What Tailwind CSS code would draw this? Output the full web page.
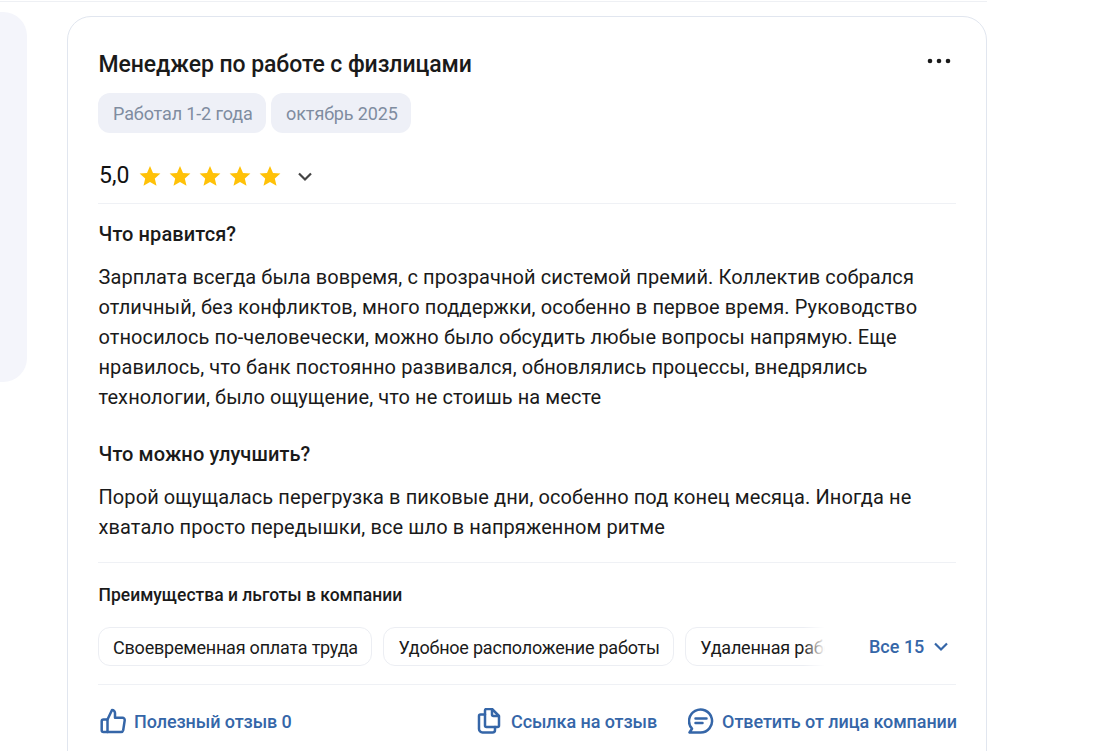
<!DOCTYPE html>
<html lang="ru">
<head>
<meta charset="utf-8">
<script src="https://cdn.jsdelivr.net/npm/@tailwindcss/browser@4"></script>
</head>
<body class="bg-white overflow-hidden font-['Roboto',sans-serif] text-[#1a1a1a]">
<div class="w-[1102px] h-[751px] overflow-hidden">
  <div class="w-[987px] h-[1px] mt-[1px] bg-[#eef0f4]"></div>
  <div class="flex w-[987px] items-start">
    <div class="w-[27px] h-[370px] mt-[10px] rounded-r-[24px] bg-[#f4f5fb] shrink-0"></div>
    <div class="ml-[40px] mt-[14px] w-[920px] h-[800px] rounded-[24px] border border-[#e1e6ef] px-[30px] pt-[31px] shrink-0">
      <div class="flex justify-between items-start h-[34px]">
        <h2 class="pl-[0.500px] text-[23px] tracking-[-0.07px] leading-[34px] font-medium text-[#1a1a1a]">Менеджер по работе с физлицами</h2>
        <svg class="mt-[10px] mr-[5px]" width="24" height="6" viewBox="0 0 24 6"><circle cx="3" cy="3" r="2.300" fill="#1a1a1a"/><circle cx="12" cy="3" r="2.300" fill="#1a1a1a"/><circle cx="21" cy="3" r="2.300" fill="#1a1a1a"/></svg>
      </div>
      <div class="flex gap-[5px] mt-[11px]">
        <span class="h-[40px] pl-[15px] pr-[13.500px] rounded-[12px] bg-[#eef0f7] text-[18px] tracking-[-0.125px] leading-[41px] text-[#7f8ca0]">Работал 1-2 года</span>
        <span class="h-[40px] pl-[15px] pr-[13.500px] rounded-[12px] bg-[#eef0f7] text-[18px] tracking-[-0.125px] leading-[41px] text-[#7f8ca0]">октябрь 2025</span>
      </div>
      <div class="flex items-center mt-[22px] h-[42px]">
        <span class="text-[23px] leading-[42px] h-[42px] w-[41px] pl-[1px] text-[#111]">5,0</span>
        <div class="flex gap-[8px]">
          <svg width="22" height="22" viewBox="0 0 22 22"><path d="M11 1l3 6.900 7.400.7-5.600 4.900 1.700 7.300L11 16.900l-6.500 3.900 1.700-7.300L.6 8.600 8 7.900z" fill="#ffc107"/></svg>
          <svg width="22" height="22" viewBox="0 0 22 22"><path d="M11 1l3 6.900 7.400.7-5.600 4.900 1.700 7.300L11 16.900l-6.500 3.900 1.700-7.300L.6 8.600 8 7.900z" fill="#ffc107"/></svg>
          <svg width="22" height="22" viewBox="0 0 22 22"><path d="M11 1l3 6.900 7.400.7-5.600 4.900 1.700 7.300L11 16.900l-6.500 3.900 1.700-7.300L.6 8.600 8 7.900z" fill="#ffc107"/></svg>
          <svg width="22" height="22" viewBox="0 0 22 22"><path d="M11 1l3 6.900 7.400.7-5.600 4.900 1.700 7.300L11 16.900l-6.500 3.900 1.700-7.300L.6 8.600 8 7.900z" fill="#ffc107"/></svg>
          <svg width="22" height="22" viewBox="0 0 22 22"><path d="M11 1l3 6.900 7.400.7-5.600 4.900 1.700 7.300L11 16.900l-6.500 3.900 1.700-7.300L.6 8.600 8 7.900z" fill="#ffc107"/></svg>
        </div>
        <svg class="ml-[16px]" width="16" height="16" viewBox="0 0 16 16" fill="none"><path d="M2 5.500L8 11.500l6-6" stroke="#444" stroke-width="2.200"/></svg>
      </div>
      <div class="h-[1px] bg-[#eff1f5] mt-[6px]"></div>
      <h3 class="pl-[0.500px] mt-[15px] text-[20px] tracking-[0.1px] leading-[30px] font-medium">Что нравится?</h3>
      <p class="pl-[0.500px] mt-[13px] text-[20px] tracking-[0.09px] leading-[30px] w-[858px]">Зарплата всегда была вовремя, с прозрачной системой премий. Коллектив собрался отличный, без конфликтов, много поддержки, особенно в первое время. Руководство относилось по-человечески, можно было обсудить любые вопросы напрямую. Еще нравилось, что банк постоянно развивался, обновлялись процессы, внедрялись технологии, было ощущение, что не стоишь на месте</p>
      <h3 class="pl-[0.500px] mt-[27px] text-[20px] tracking-[0.1px] leading-[30px] font-medium">Что можно улучшить?</h3>
      <p class="pl-[0.500px] mt-[13px] text-[20px] tracking-[0.09px] leading-[30px] w-[858px]">Порой ощущалась перегрузка в пиковые дни, особенно под конец месяца. Иногда не хватало просто передышки, все шло в напряженном ритме</p>
      <div class="h-[1px] bg-[#eff1f5] mt-[20px]"></div>
      <h4 class="pl-[0.500px] mt-[20px] text-[17.500px] leading-[24px] font-medium">Преимущества и льготы в компании</h4>
      <div class="flex items-center mt-[19px] h-[40px] relative overflow-hidden">
        <div class="flex gap-[11.500px] w-[727px] overflow-hidden shrink-0">
          <span class="h-[39px] pl-[14px] pr-[13px] rounded-[12px] border border-[#eceef3] text-[18px] tracking-[-0.21px] leading-[40px] whitespace-nowrap shrink-0">Своевременная оплата труда</span>
          <span class="h-[39px] pl-[14px] pr-[13px] rounded-[12px] border border-[#eceef3] text-[18px] tracking-[-0.21px] leading-[40px] whitespace-nowrap shrink-0">Удобное расположение работы</span>
          <span class="h-[39px] pl-[14px] pr-[13px] rounded-[12px] border border-[#eceef3] text-[18px] tracking-[-0.21px] leading-[40px] whitespace-nowrap shrink-0">Удаленная работа</span>
        </div>
        <div class="absolute left-[705px] top-0 h-[40px] w-[22px] bg-gradient-to-r from-white/0 to-white"></div>
        <span class="ml-[44px] text-[18px] font-medium text-[#3566a8]">Все 15</span>
        <svg class="ml-[9px]" width="16" height="16" viewBox="0 0 16 16" fill="none"><path d="M2 5.500L8 11.500l6-6" stroke="#3566a8" stroke-width="2.200"/></svg>
      </div>
      <div class="h-[1px] bg-[#eff1f5] mt-[18px]"></div>
      <div class="flex justify-between items-center mt-[19px] h-[34px]">
        <div class="flex items-center gap-[7px] pl-[1px] text-[#3566a8] text-[18px] tracking-[-0.08px] font-medium">
          <svg width="28" height="28" viewBox="0 0 28 28" fill="none" stroke="#3566a8" stroke-width="2.500" stroke-linejoin="round" stroke-linecap="round"><path d="M8.500 12.500v12.500H4.500a1.800 1.800 0 0 1-1.800-1.800v-8.900a1.800 1.800 0 0 1 1.800-1.800h4z"/><path d="M8.500 12.500l4.500-9.500a3 3 0 0 1 3 3v4.800h7.500a2.200 2.200 0 0 1 2.200 2.500l-1.500 10a2.200 2.200 0 0 1-2.200 1.700H8.500"/></svg>
          <span>Полезный отзыв 0</span>
        </div>
        <div class="flex items-center gap-[31px] -mr-[1px]">
          <div class="flex items-center gap-[10px] text-[#3566a8] text-[18px] tracking-[-0.08px] font-medium">
            <svg width="24" height="26" viewBox="0 0 24 26" fill="none" stroke="#3566a8" stroke-width="2.500" stroke-linejoin="round" stroke-linecap="round"><path d="M8 6.500V2.500a1.500 1.500 0 0 1 1.500-1.500h5.500l7 7v9.500a1.500 1.500 0 0 1-1.500 1.500H18"/><path d="M15 1.500v5a1.500 1.500 0 0 0 1.500 1.500H21.500"/><path d="M8 6.500H3.500A1.500 1.500 0 0 0 2 8v13a3.500 3.500 0 0 0 3.500 3.500h10A2.500 2.500 0 0 0 18 22v-3H9.500A1.500 1.500 0 0 1 8 17.500z"/></svg>
            <span>Ссылка на отзыв</span>
          </div>
          <div class="flex items-center gap-[8px] text-[#3566a8] text-[18px] tracking-[-0.08px] font-medium">
            <svg width="26" height="26" viewBox="0 0 26 26" fill="none" stroke="#3566a8" stroke-width="2.500" stroke-linecap="round" stroke-linejoin="round"><path d="M1.500 24.500h11a11.500 11.500 0 1 0-8.500-3.800z"/><path d="M7.500 10.500h11M7.500 15h7"/></svg>
            <span>Ответить от лица компании</span>
          </div>
        </div>
      </div>
    </div>
  </div>
</div>
</body>
</html>
